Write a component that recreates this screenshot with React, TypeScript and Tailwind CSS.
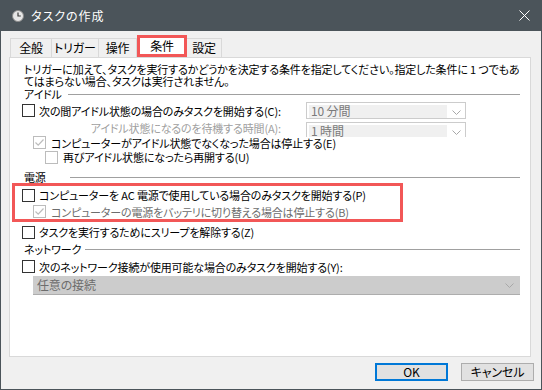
import React from 'react';

const font = "[font-family:'Noto_Sans_CJK_JP','Noto_Sans',sans-serif] [font-feature-settings:'palt']";

const Box: React.FC<{ checked?: boolean; disabled?: boolean }> = ({ checked, disabled }) => (
  <span
    className={`flex h-[13px] w-[13px] shrink-0 items-center justify-center bg-white border ${
      disabled ? 'border-[#bcbcbc]' : 'border-[#333333]'
    }`}
  >
    {checked && (
      <svg width="11" height="11" viewBox="0 0 11 11">
        <polyline points="1.5,5.5 4.2,8.2 9.5,2.5" fill="none" stroke="#bcbcbc" strokeWidth="1.2" />
      </svg>
    )}
  </span>
);

const Chevron: React.FC = () => (
  <svg width="9" height="5" viewBox="0 0 9 5">
    <polyline points="0.5,0.5 4.5,4.5 8.5,0.5" fill="none" stroke="#a8a8a8" strokeWidth="1" />
  </svg>
);

const Combo: React.FC<{ label: string }> = ({ label }) => (
  <div className="flex h-[17px] w-[160px] shrink-0 items-stretch border border-[#cccccc] bg-white">
    <div className="ml-[2px] mt-[2px] flex w-[138px] items-start bg-[#f0f0f0] pl-[2px] text-[12px] text-[#7a7a7a]">{label}</div>
    <div className="flex flex-1 items-center justify-center pt-[3px]">
      <Chevron />
    </div>
  </div>
);

const Header: React.FC<{ label: string; w: string }> = ({ label, w }) => (
  <div className="flex h-[12px] items-center pl-[2px]">
    <span className={`${w} shrink-0 whitespace-nowrap`}>{label}</span>
    <div className="h-px flex-1 bg-[#a0a0a0]" />
  </div>
);

const tabs = ['全般', 'トリガー', '操作', '条件', '設定'];
const tabW = ['w-[42px]', 'w-[47px]', 'w-[38px]', 'w-[50px]', 'w-[35px]'];

export default function App() {
  return (
    <div className={`flex h-[390px] w-[542px] flex-col overflow-hidden border border-t-0 border-[#4b545a] bg-[#f0f0f0] text-[11px] leading-[12px] tracking-[-0.15px] text-black ${font}`}>
      {/* title bar */}
      <div className="flex h-[31px] shrink-0 items-center bg-[#4b545a] pl-[11px] pr-[11px] text-white">
        <svg width="12" height="12" viewBox="0 0 12 12">
          <circle cx="6" cy="6" r="5.5" fill="#e6e6e6" stroke="#8a8a8a" />
          <path d="M6 2.5V6h2.8" fill="none" stroke="#3a3a3a" strokeWidth="1.2" />
        </svg>
        <span className="ml-[7px] text-[12px] tracking-[1px]">タスクの作成</span>
        <div className="flex-1" />
        <svg width="11" height="11" viewBox="0 0 11 11">
          <path d="M0.5 0.5L10.5 10.5M10.5 0.5L0.5 10.5" stroke="#ffffff" strokeWidth="1" />
        </svg>
      </div>

      {/* tabs */}
      <div className="ml-[9px] mt-[4px] flex h-[22px] items-end text-[12px]">
        {tabs.map((t, i) =>
          i === 3 ? (
            <div
              key={t}
              className={`${tabW[i]} flex h-[22px] items-center justify-center border-[3px] border-[#f25757] bg-white pb-[1px]`}
            >
              {t}
            </div>
          ) : (
            <div
              key={t}
              className={`${tabW[i]} flex h-[19px] items-center justify-center whitespace-nowrap border border-b-0 border-[#d9d9d9] bg-[#f0f0f0] ${i > 0 ? 'border-l-0' : ''}`}
            >
              {t}
            </div>
          )
        )}
      </div>

      {/* panel */}
      <div className="ml-[8px] flex h-[300px] w-[522px] shrink-0 flex-col border border-[#d9d9d9] bg-white pl-[12px] pr-[10px] pt-[5px]">
        <div className="whitespace-nowrap pl-[2px]">
          トリガーに加えて、タスクを実行するかどうかを決定する条件を指定してください。指定した条件に 1 つでもあ
          <br />
          てはまらない場合、タスクは実行されません。
        </div>

        <div className="mt-[1px]">
          <Header label="アイドル" w="w-[44px]" />
        </div>

        <div className="mt-[1px] flex h-[19px] items-center whitespace-nowrap">
          <Box />
          <span className="ml-[4px] w-[267px]">次の間アイドル状態の場合のみタスクを開始する(C):</span>
          <Combo label="10 分間" />
        </div>

        <div className="flex h-[15px] items-start whitespace-nowrap">
          <span className="w-[259px] pt-[2px] text-right text-[#a0a0a0]">アイドル状態になるのを待機する時間(A):</span>
          <div className="ml-[25px] mt-[2px] h-[15px] shrink-0 overflow-hidden">
            <Combo label="1 時間" />
          </div>
        </div>

        <div className="flex h-[15px] items-center whitespace-nowrap pl-[11px]">
          <Box checked disabled />
          <span className="ml-[5px]">コンピューターがアイドル状態でなくなった場合は停止する(E)</span>
        </div>

        <div className="flex h-[14px] items-center whitespace-nowrap pl-[23px]">
          <Box disabled />
          <span className="ml-[5px]">再びアイドル状態になったら再開する(U)</span>
        </div>

        <div className="mt-[7px]">
          <Header label="電源" w="w-[46px]" />
        </div>

        <div className="ml-[-10px] flex h-[39px] w-[391px] flex-col whitespace-nowrap border-[3px] border-[#f25757] pl-[7px]">
          <div className="flex h-[18px] items-center">
            <Box />
            <span className="ml-[4px]">コンピューターを AC 電源で使用している場合のみタスクを開始する(P)</span>
          </div>
          <div className="flex h-[15px] items-center pl-[11px]">
            <Box checked disabled />
            <span className="ml-[5px] text-[#6d6d6d]">コンピューターの電源をバッテリに切り替える場合は停止する(B)</span>
          </div>
        </div>

        <div className="mt-[1px] flex h-[18px] items-center whitespace-nowrap">
          <Box />
          <span className="ml-[4px]">タスクを実行するためにスリープを解除する(Z)</span>
        </div>

        <div className="mt-[2px]">
          <Header label="ネットワーク" w="w-[61px]" />
        </div>

        <div className="mt-[2px] flex h-[19px] items-center whitespace-nowrap">
          <Box />
          <span className="ml-[4px]">次のネットワーク接続が使用可能な場合のみタスクを開始する(Y):</span>
        </div>

        <div className="ml-[11px] flex h-[19px] w-[487px] items-center border-b border-[#adadad] bg-[#cccccc] pl-[4px] pr-[6px] text-[12px] text-[#6d6d6d]">
          <span className="flex-1">任意の接続</span>
          <Chevron />
        </div>
      </div>

      {/* buttons */}
      <div className="mr-[7px] mt-[6px] flex justify-end gap-[13px] text-[12px]">
        <button className="flex h-[18px] w-[73px] items-center justify-center border-2 border-[#0078d7] bg-[#e1e1e1]">
          OK
        </button>
        <button className="flex h-[18px] w-[73px] items-center justify-center border border-[#adadad] bg-[#e1e1e1]">
          キャンセル
        </button>
      </div>
    </div>
  );
}
